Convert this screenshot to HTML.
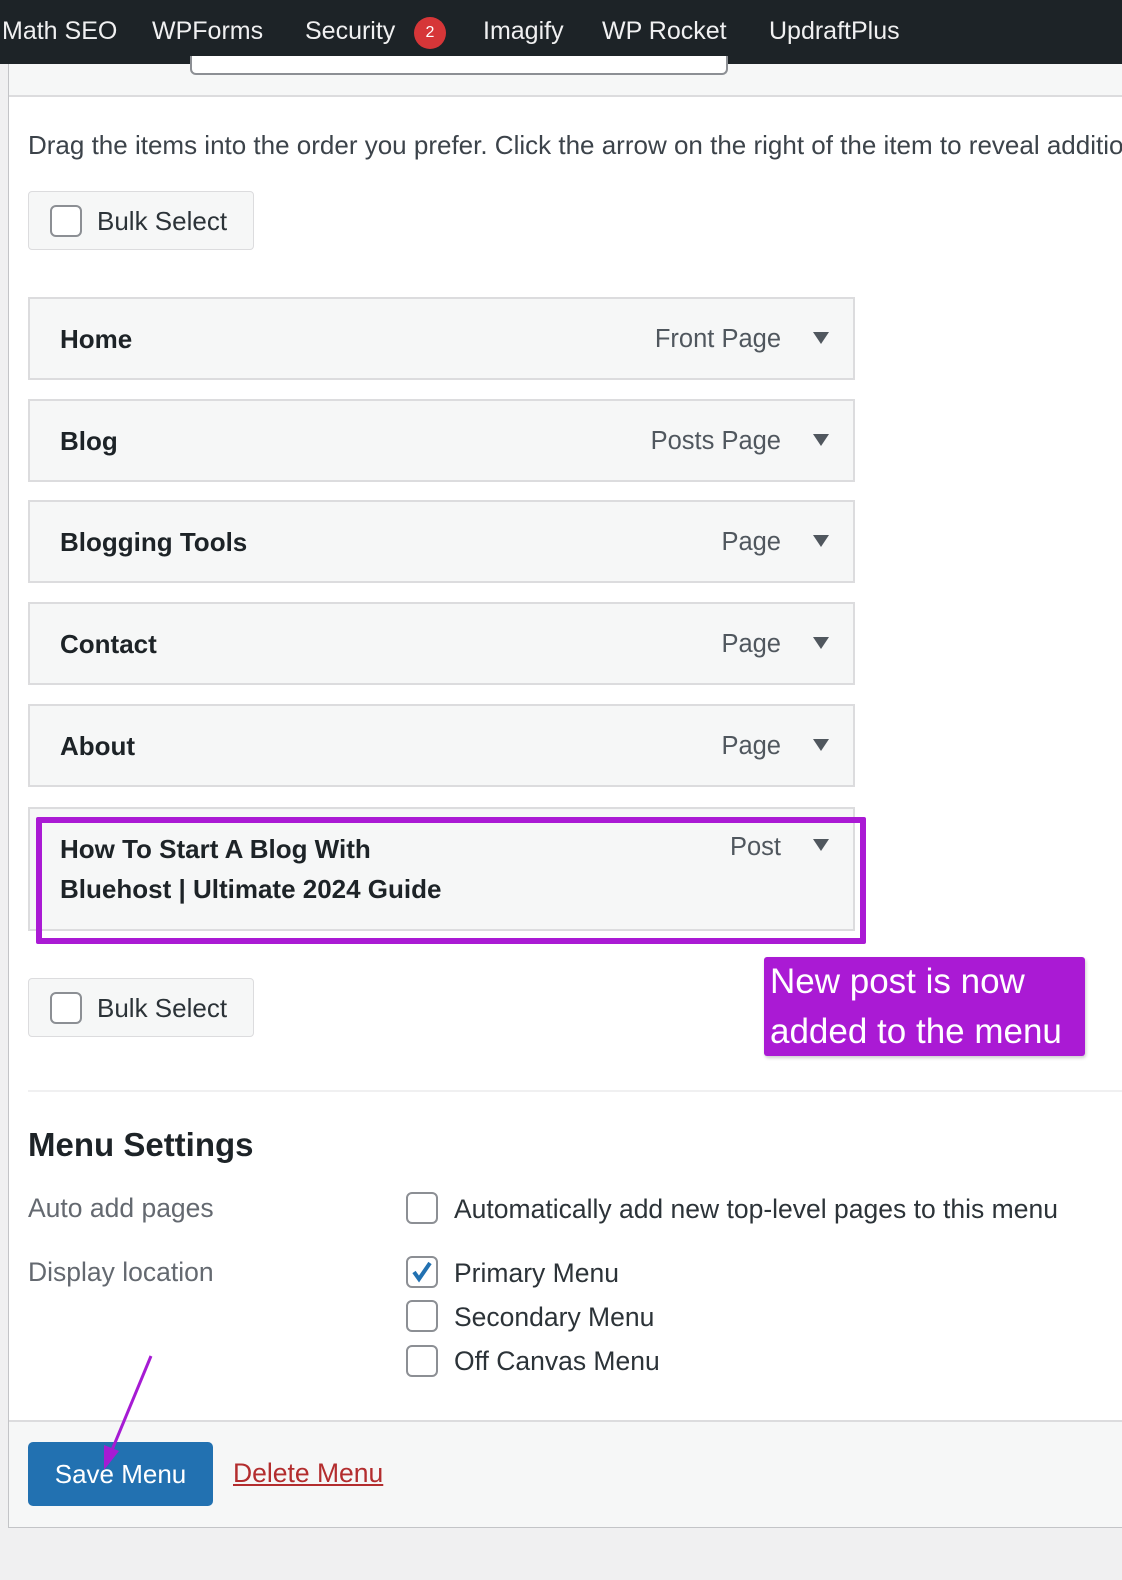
<!DOCTYPE html>
<html><head><meta charset="utf-8"><style>
*{margin:0;padding:0;box-sizing:border-box}
body{width:1122px;height:1580px;background:#f0f0f1;font-family:"Liberation Sans",Arial,sans-serif;position:relative;overflow:hidden;color:#3c434a}
.a{position:absolute}
.bar{left:0;top:0;width:1122px;height:64px;background:#1d2327}
.bar span{position:absolute;top:17px;font-size:25px;color:#f0f0f1;white-space:nowrap}
.badge{left:414px;top:17px;width:32px;height:32px;border-radius:16px;background:#d63638;color:#fff;font-size:16px;text-align:center;line-height:32px}
.panel{left:8px;top:64px;width:1114px;height:1464px;background:#fff;border-left:1px solid #c3c4c7;border-bottom:1px solid #c3c4c7}
.cb{position:absolute;width:32px;height:32px;border:2px solid #8c8f94;border-radius:6px;background:#fff}
.bulk{width:226px;height:59px;background:#f6f7f7;border:1px solid #dcdcde;border-radius:4px}
.bulk .cb{left:21px;top:13px}
.bulk span{position:absolute;left:68px;top:14px;font-size:26px;color:#2c3338}
.item{left:28px;width:827px;height:83px;background:#f6f7f7;border:2px solid #dcdcde}
.item b{position:absolute;left:30px;top:20px;font-size:26px;color:#1d2327;line-height:40px;white-space:nowrap}
.item i{position:absolute;right:72px;top:26px;font-style:normal;font-size:25.5px;color:#50575e}
.item em{position:absolute;right:24px;top:33px;width:0;height:0;border-left:8px solid transparent;border-right:8px solid transparent;border-top:12px solid #50575e}
.lbl{font-size:26.5px;color:#646970}
.opt{font-size:26.5px;color:#2c3338;white-space:nowrap}
</style></head><body>
<div class="a bar">
<span style="left:2px">Math SEO</span>
<span style="left:152px">WPForms</span>
<span style="left:305px">Security</span>
<span style="left:483px">Imagify</span>
<span style="left:602px">WP Rocket</span>
<span style="left:769px">UpdraftPlus</span>
</div>
<div class="a badge">2</div>
<div class="a panel"></div>
<div class="a" style="left:9px;top:64px;width:1113px;height:33px;background:#f6f7f7;border-bottom:2px solid #dcdcde"></div>
<div class="a" style="left:190px;top:56px;width:538px;height:19px;background:#fff;border:2px solid #8c8f94;border-top:none;border-radius:0 0 6px 6px"></div>
<div class="a" style="left:28px;top:130px;font-size:26px;white-space:nowrap;color:#3c434a">Drag the items into the order you prefer. Click the arrow on the right of the item to reveal additional</div>
<div class="a bulk" style="left:28px;top:191px"><div class="cb"></div><span>Bulk Select</span></div>

<div class="a item" style="top:297px"><b>Home</b><i>Front Page</i><em></em></div>
<div class="a item" style="top:399px"><b>Blog</b><i>Posts Page</i><em></em></div>
<div class="a item" style="top:500px"><b>Blogging Tools</b><i>Page</i><em></em></div>
<div class="a item" style="top:602px"><b>Contact</b><i>Page</i><em></em></div>
<div class="a item" style="top:704px"><b>About</b><i>Page</i><em></em></div>
<div class="a item" style="top:807px;height:124px"><b style="top:20px">How To Start A Blog With<br>Bluehost | Ultimate 2024 Guide</b><i style="top:24px">Post</i><em style="top:30px"></em></div>
<div class="a" style="left:36px;top:817px;width:830px;height:127px;border:6px solid #aa1ad4;border-radius:2px"></div>
<div class="a" style="left:764px;top:957px;width:321px;height:99px;background:#aa1ad4;border-radius:3px;box-shadow:1px 2px 3px rgba(0,0,0,.2);color:#fff;font-size:35px;line-height:50px;padding:0 0 0 6px;white-space:nowrap">New post is now<br>added to the menu</div>
<div class="a bulk" style="left:28px;top:978px"><div class="cb"></div><span>Bulk Select</span></div>

<div class="a" style="left:28px;top:1090px;width:1094px;height:2px;background:#f0f0f1"></div>
<div class="a" style="left:28px;top:1126px;font-size:33px;font-weight:bold;color:#1d2327">Menu Settings</div>
<div class="a lbl" style="left:28px;top:1193px">Auto add pages</div>
<div class="a lbl" style="left:28px;top:1257px">Display location</div>
<div class="cb" style="left:406px;top:1192px"></div>
<div class="cb" style="left:406px;top:1256px"><svg width="28" height="28" viewBox="0 0 28 28" style="position:absolute;left:0;top:0"><path d="M6 14 L11 21 L22 5" fill="none" stroke="#2271b1" stroke-width="4"/></svg></div>
<div class="cb" style="left:406px;top:1300px"></div>
<div class="cb" style="left:406px;top:1345px"></div>
<div class="a opt" style="left:454px;top:1194px">Automatically add new top-level pages to this menu</div>
<div class="a opt" style="left:454px;top:1258px">Primary Menu</div>
<div class="a opt" style="left:454px;top:1302px">Secondary Menu</div>
<div class="a opt" style="left:454px;top:1346px">Off Canvas Menu</div>

<div class="a" style="left:9px;top:1420px;width:1113px;height:107px;background:#f6f7f7;border-top:2px solid #dcdcde"></div>
<div class="a" style="left:28px;top:1442px;width:185px;height:64px;background:#2271b1;border-radius:5px;color:#fff;font-size:26px;text-align:center;line-height:64px">Save Menu</div>
<div class="a" style="left:233px;top:1458px;font-size:26.5px;color:#b32d2e;text-decoration:underline">Delete Menu</div>
<svg class="a" style="left:0;top:0" width="1122" height="1580"><line x1="151" y1="1356" x2="112" y2="1450" stroke="#a61bd3" stroke-width="3"/><path d="M104 1470 L104 1445 L119 1451 Z" fill="#a61bd3"/></svg>
</body></html>
